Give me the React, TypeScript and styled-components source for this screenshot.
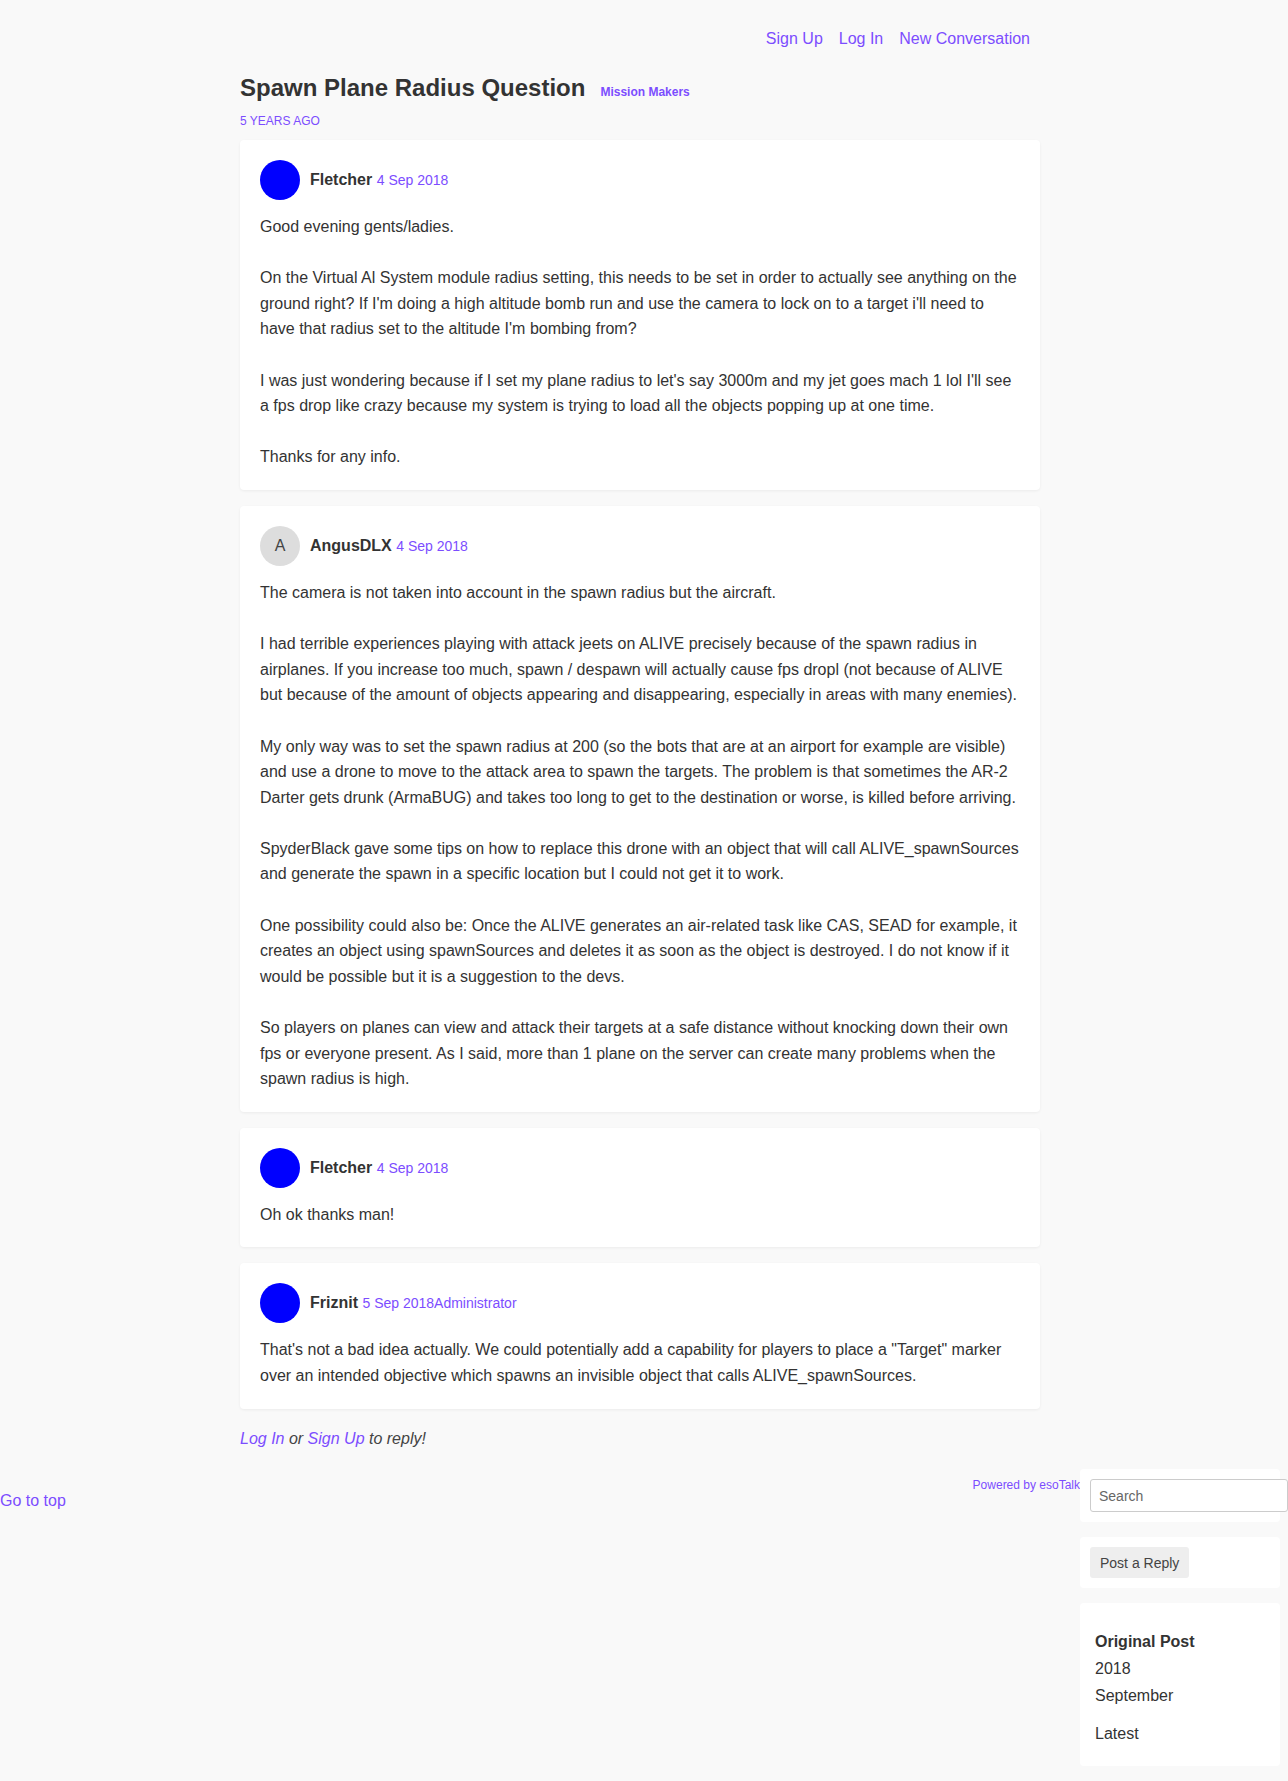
import React from "react";
import styled, { createGlobalStyle } from "styled-components";

const purple = "#7c4dff";
const text = "#333";

const GlobalStyle = createGlobalStyle`
  html, body { overflow-x: hidden; }
  body {
    margin: 0;
    background: #f9f9f9;
    font-family: "Liberation Sans", Arial, Helvetica, sans-serif;
    color: ${text};
  }
  a { color: ${purple}; text-decoration: none; }
`;

const Page = styled.div`
  display: flex;
  flex-direction: column;
`;

const Main = styled.main`
  width: 800px;
  margin: 0 auto;
  padding-right: 8px;
  display: flex;
  flex-direction: column;
`;

const Nav = styled.nav`
  display: flex;
  justify-content: flex-end;
  gap: 16px;
  padding: 29px 10px 0 0;
  font-size: 16px;
  line-height: 20px;
`;

const TitleRow = styled.div`
  display: flex;
  align-items: baseline;
  gap: 15px;
  margin-top: 24px;
`;

const Title = styled.h1`
  margin: 0;
  font-size: 24px;
  line-height: 30px;
  font-weight: bold;
  color: ${text};
`;

const Channel = styled.a`
  font-size: 12px;
  font-weight: bold;
`;

const Age = styled.div`
  margin-top: 10px;
  font-size: 12px;
  line-height: 16px;
  color: ${purple};
  text-transform: uppercase;
`;

const Posts = styled.div`
  display: flex;
  flex-direction: column;
  gap: 16px;
  margin-top: 11px;
`;

const Card = styled.article`
  background: #fff;
  border-radius: 4px;
  box-shadow: 0 1px 3px rgba(0, 0, 0, 0.06);
  padding: 20px;
`;

const PostHeader = styled.header`
  display: flex;
  align-items: center;
  gap: 10px;
  margin-bottom: 14px;
`;

const Avatar = styled.div<{ $letter?: boolean }>`
  width: 40px;
  height: 40px;
  border-radius: 50%;
  flex-shrink: 0;
  background: ${(p) => (p.$letter ? "#ddd" : "#0000ff")};
  color: #444;
  display: flex;
  align-items: center;
  justify-content: center;
  font-size: 16px;
`;

const Author = styled.span`
  font-size: 16px;
  font-weight: bold;
  color: ${text};
`;

const Meta = styled.span`
  font-size: 14px;
  font-weight: normal;
  color: ${purple};
`;

const Body = styled.div`
  font-size: 16px;
  line-height: 25.6px;
  color: ${text};
`;

const Para = styled.p`
  margin: 0;
  & + & {
    margin-top: 25.6px;
  }
`;

const Reply = styled.p`
  margin: 17px 0 0;
  font-style: italic;
  font-size: 16px;
  line-height: 25.6px;
  color: #444;
`;

const Footer = styled.footer`
  display: flex;
  align-items: flex-start;
  margin-top: 18px;
  padding-bottom: 15px;
`;

const GoTop = styled.a`
  margin-top: 23px;
  font-size: 16px;
  line-height: 18px;
`;

const Powered = styled.a`
  margin-left: auto;
  margin-top: 9px;
  font-size: 12px;
  line-height: 14px;
`;

const Sidebar = styled.aside`
  width: 200px;
  flex-shrink: 0;
  margin-right: 8px;
  display: flex;
  flex-direction: column;
  gap: 15px;
`;

const SideCard = styled.div<{ $pad?: string }>`
  background: #fff;
  border-radius: 4px;
  padding: ${(p) => p.$pad || "10px"};
`;

const SearchInput = styled.input`
  display: block;
  height: 33px;
  box-sizing: border-box;
  width: calc(100% + 18px);
  padding: 0 8px;
  border: 1px solid #ccc;
  border-radius: 3px;
  font-family: inherit;
  font-size: 14px;
  color: #333;
  background: #fff;
  &::placeholder { color: #666; }
`;

const Button = styled.button`
  height: 31px;
  padding: 0 10px;
  border: none;
  border-radius: 3px;
  background: #eee;
  color: #444;
  font-family: inherit;
  font-size: 14px;
  cursor: pointer;
`;

const TimeHead = styled.div`
  margin-top: 10px;
  font-size: 16px;
  line-height: 27px;
  font-weight: bold;
`;

const TimeItem = styled.div<{ $gap?: boolean }>`
  font-size: 16px;
  line-height: 27px;
  margin-top: ${(p) => (p.$gap ? "11px" : "0")};
`;

type Post = {
  author: string;
  date: string;
  extra?: string;
  letter?: string;
  paras: string[];
};

const posts: Post[] = [
  {
    author: "Fletcher",
    date: "4 Sep 2018",
    paras: [
      "Good evening gents/ladies.",
      "On the Virtual Al System module radius setting, this needs to be set in order to actually see anything on the ground right? If I'm doing a high altitude bomb run and use the camera to lock on to a target i'll need to have that radius set to the altitude I'm bombing from?",
      "I was just wondering because if I set my plane radius to let's say 3000m and my jet goes mach 1 lol I'll see a fps drop like crazy because my system is trying to load all the objects popping up at one time.",
      "Thanks for any info.",
    ],
  },
  {
    author: "AngusDLX",
    date: "4 Sep 2018",
    letter: "A",
    paras: [
      "The camera is not taken into account in the spawn radius but the aircraft.",
      "I had terrible experiences playing with attack jeets on ALIVE precisely because of the spawn radius in airplanes. If you increase too much, spawn / despawn will actually cause fps dropl (not because of ALIVE but because of the amount of objects appearing and disappearing, especially in areas with many enemies).",
      "My only way was to set the spawn radius at 200 (so the bots that are at an airport for example are visible) and use a drone to move to the attack area to spawn the targets. The problem is that sometimes the AR-2 Darter gets drunk (ArmaBUG) and takes too long to get to the destination or worse, is killed before arriving.",
      "SpyderBlack gave some tips on how to replace this drone with an object that will call ALIVE_spawnSources and generate the spawn in a specific location but I could not get it to work.",
      "One possibility could also be: Once the ALIVE generates an air-related task like CAS, SEAD for example, it creates an object using spawnSources and deletes it as soon as the object is destroyed. I do not know if it would be possible but it is a suggestion to the devs.",
      "So players on planes can view and attack their targets at a safe distance without knocking down their own fps or everyone present. As I said, more than 1 plane on the server can create many problems when the spawn radius is high.",
    ],
  },
  {
    author: "Fletcher",
    date: "4 Sep 2018",
    paras: ["Oh ok thanks man!"],
  },
  {
    author: "Friznit",
    date: "5 Sep 2018",
    extra: "Administrator",
    paras: [
      'That\'s not a bad idea actually. We could potentially add a capability for players to place a "Target" marker over an intended objective which spawns an invisible object that calls ALIVE_spawnSources.',
    ],
  },
];

export default function App() {
  return (
    <Page>
      <GlobalStyle />
      <Main>
        <Nav>
          <a href="#">Sign Up</a>
          <a href="#">Log In</a>
          <a href="#">New Conversation</a>
        </Nav>
        <TitleRow>
          <Title>Spawn Plane Radius Question</Title>
          <Channel href="#">Mission Makers</Channel>
        </TitleRow>
        <Age>5 years ago</Age>
        <Posts>
          {posts.map((p, i) => (
            <Card key={i}>
              <PostHeader>
                <Avatar $letter={!!p.letter}>{p.letter}</Avatar>
                <div>
                  <Author>{p.author}</Author> <Meta>{p.date}{p.extra}</Meta>
                </div>
              </PostHeader>
              <Body>
                {p.paras.map((t, j) => (
                  <Para key={j}>{t}</Para>
                ))}
              </Body>
            </Card>
          ))}
        </Posts>
        <Reply>
          <a href="#">Log In</a> or <a href="#">Sign Up</a> to reply!
        </Reply>
      </Main>
      <Footer>
        <GoTop href="#">Go to top</GoTop>
        <Powered href="#">Powered by esoTalk</Powered>
        <Sidebar>
          <SideCard>
            <SearchInput placeholder="Search" />
          </SideCard>
          <SideCard>
            <Button>Post a Reply</Button>
          </SideCard>
          <SideCard $pad="15px 15px 19px">
            <TimeHead>Original Post</TimeHead>
            <TimeItem>2018</TimeItem>
            <TimeItem>September</TimeItem>
            <TimeItem $gap>Latest</TimeItem>
          </SideCard>
        </Sidebar>
      </Footer>
    </Page>
  );
}
